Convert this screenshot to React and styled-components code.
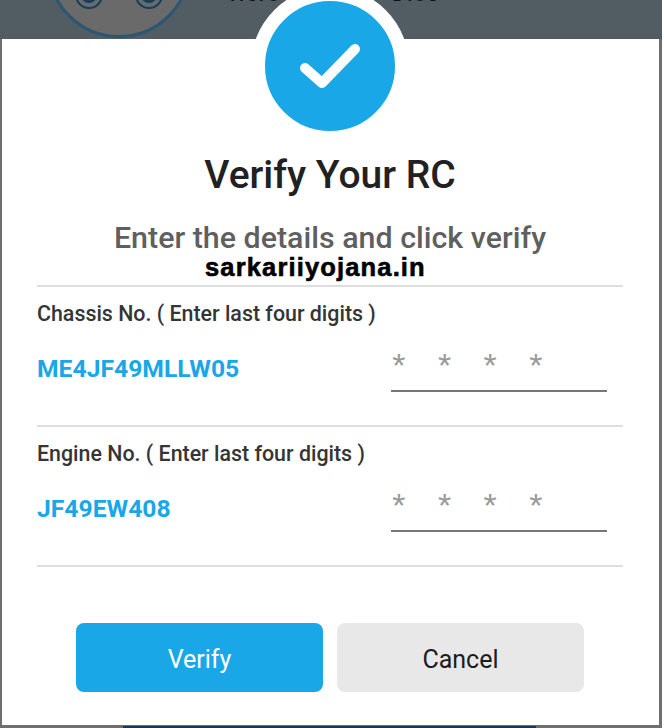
import React from 'react';
import styled, { createGlobalStyle } from 'styled-components';

const GlobalStyle = createGlobalStyle`
  html, body {
    margin: 0;
    padding: 0;
    background: #fff;
  }
  body {
    font-family: Roboto, "Liberation Sans", sans-serif;
  }
`;

const Screen = styled.div`
  position: relative;
  width: 662px;
  height: 728px;
  overflow: hidden;
  background: linear-gradient(#525c63 39px, #6e6e6e 39px);
  padding: 39px 3px 3px 2px;
  box-sizing: border-box;
`;

const BackAvatar = styled.div`
  position: absolute;
  left: 47px;
  top: -106px;
  width: 144px;
  height: 144px;
  box-sizing: border-box;
  border-radius: 50%;
  border: 3px solid #2b5674;
  background: #6a6a6a;
`;

const BackEye = styled.div`
  position: absolute;
  top: 84px;
  left: ${p => p.$left}px;
  width: 28px;
  height: 28px;
  box-sizing: border-box;
  border-radius: 50%;
  border: 2px solid #12405f;
  display: flex;
  align-items: center;
  justify-content: center;

  &::after {
    content: '';
    width: 16px;
    height: 16px;
    border-radius: 50%;
    background: #12405f;
  }
`;

const BackText = styled.div`
  position: absolute;
  top: -18px;
  left: 230px;
  width: 210px;
  font-size: 20px;
  font-weight: 500;
  letter-spacing: 2px;
  color: #111;
  display: flex;
  justify-content: space-between;
`;

const BackBanner = styled.div`
  position: absolute;
  left: 123px;
  bottom: 0;
  width: 413px;
  height: 2px;
  background: #16385a;
`;

const Modal = styled.div`
  position: relative;
  height: 100%;
  background: #fff;
  padding: 0 36px 0 35px;
  display: flex;
  flex-direction: column;
`;

const Badge = styled.div`
  position: absolute;
  top: -52px;
  left: 249px;
  width: 158px;
  height: 158px;
  box-sizing: border-box;
  border-radius: 50%;
  background: #1aa7e8;
  border: 14px solid #fff;
  display: flex;
  align-items: center;
  justify-content: center;
`;

const Title = styled.h1`
  margin: 109px 0 0;
  font-size: 39px;
  line-height: 54px;
  font-weight: 500;
  color: #212121;
  text-align: center;
`;

const Subtitle = styled.p`
  margin: 16px 0 0;
  font-size: 30.4px;
  line-height: 40px;
  font-weight: 500;
  color: #5f5f5f;
  text-align: center;
  white-space: nowrap;
`;

const Watermark = styled.div`
  font-family: "Liberation Sans", Arial, sans-serif;
  font-weight: 700;
  font-size: 25.5px;
  line-height: 26px;
  letter-spacing: 1.15px;
  -webkit-text-stroke: 0.6px #000;
  color: #000;
  margin: -4px 0 0 168px;
  white-space: nowrap;
`;

const Section = styled.section`
  border-top: 2px solid #dedede;
  margin-top: ${p => (p.$first ? 5 : 0)}px;
  padding-top: 15px;
  height: 123px;
`;

const EndRule = styled.div`
  border-top: 2px solid #dedede;
`;

const Label = styled.div`
  font-size: 21.4px;
  line-height: 24px;
  font-weight: 500;
  color: #353535;
  white-space: nowrap;
`;

const Row = styled.div`
  display: flex;
  justify-content: space-between;
  align-items: flex-end;
  padding-right: 16px;
  margin-top: 13px;
`;

const Value = styled.div`
  font-size: 24.7px;
  line-height: 30px;
  font-weight: 700;
  color: #1aa7e8;
  margin-bottom: 8px;
`;

const DigitsInput = styled.div`
  width: 216px;
  height: 53px;
  box-sizing: border-box;
  border-bottom: 2px solid #777;
  display: flex;
  overflow: hidden;
`;

const Star = styled.span`
  width: 45.7px;
  text-align: center;
  margin-left: ${p => (p.$first ? -15 : 0)}px;
  font-family: "Liberation Sans", Arial, sans-serif;
  font-size: 34px;
  line-height: 52px;
  color: #9a9a9a;
`;

const Buttons = styled.div`
  display: flex;
  justify-content: center;
  gap: 14px;
  margin-top: 56px;
`;

const Button = styled.button`
  width: 247px;
  height: 69px;
  border: none;
  border-radius: 8px;
  padding: 3px 0 0;
  font-family: Roboto, "Liberation Sans", sans-serif;
  font-size: 25px;
  background: ${p => (p.$primary ? '#1aa7e8' : '#e8e8e8')};
  color: ${p => (p.$primary ? '#fff' : '#1c1c1c')};
`;

const Check = () => (
  <svg width="64" height="48" viewBox="0 0 64 48" fill="none">
    <path d="M7 26 L24 41 L57 7" stroke="#fff" strokeWidth="10" strokeLinecap="round" strokeLinejoin="round" />
  </svg>
);

const Field = ({ label, value, first }) => (
  <Section $first={first}>
    <Label>{label}</Label>
    <Row>
      <Value>{value}</Value>
      <DigitsInput>
        {[0, 1, 2, 3].map(i => <Star key={i} $first={i === 0}>*</Star>)}
      </DigitsInput>
    </Row>
  </Section>
);

export default function App() {
  return (
    <>
      <GlobalStyle />
      <Screen>
        <BackAvatar>
          <BackEye $left={25} />
          <BackEye $left={85} />
        </BackAvatar>
        <BackText><span>Hero</span><span>Dlos</span></BackText>
        <BackBanner />
        <Modal>
          <Badge><Check /></Badge>
          <Title>Verify Your RC</Title>
          <Subtitle>Enter the details and click verify</Subtitle>
          <Watermark>sarkariiyojana.in</Watermark>
          <Field first label="Chassis No. ( Enter last four digits )" value="ME4JF49MLLW05" />
          <Field label="Engine No. ( Enter last four digits )" value="JF49EW408" />
          <EndRule />
          <Buttons>
            <Button $primary>Verify</Button>
            <Button>Cancel</Button>
          </Buttons>
        </Modal>
      </Screen>
    </>
  );
}
